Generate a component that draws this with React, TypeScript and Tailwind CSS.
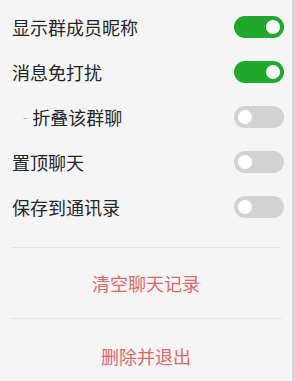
import React from "react";

const rows = [
  { label: "显示群成员昵称", on: true },
  { label: "消息免打扰", on: true },
  { label: "折叠该群聊", on: false, sub: true },
  { label: "置顶聊天", on: false },
  { label: "保存到通讯录", on: false },
];

function Toggle({ on }: { on: boolean }) {
  return (
    <div
      className={
        "flex h-[22px] w-[50px] items-center rounded-full px-[4px] " +
        (on ? "justify-end bg-[#1fa82a]" : "justify-start bg-[#d2d2d2]")
      }
    >
      <div className="h-[14px] w-[14px] rounded-full bg-white" />
    </div>
  );
}

export default function App() {
  return (
    <div className="flex h-[381px] w-[295px] overflow-hidden bg-[#f5f5f5] font-['Noto_Sans_CJK_SC',sans-serif]">
      <div className="flex flex-1 flex-col pt-[4px]">
        {rows.map((r) => (
          <div key={r.label} className="flex h-[45px] shrink-0 items-center justify-between pl-[12px] pr-[8px]">
            <div className="flex items-center text-[18px] leading-none text-[#262626]">
              {r.sub ? <span className="mr-[5px] ml-[11px] text-[12px] text-[#aaa]">-</span> : null}
              {r.label}
            </div>
            <Toggle on={r.on} />
          </div>
        ))}
        <div className="mx-[12px] mt-[18px] h-px shrink-0 bg-[#e6e6e6]" />
        <div className="flex h-[70px] shrink-0 items-center justify-center text-[18px] text-[#e06868]">清空聊天记录</div>
        <div className="mx-[10px] h-px shrink-0 bg-[#e6e6e6]" />
        <div className="flex h-[74px] shrink-0 items-center justify-center text-[18px] text-[#e06868]">删除并退出</div>
      </div>
      <div className="w-[3px] shrink-0 bg-[#d6d6d6]" />
    </div>
  );
}
